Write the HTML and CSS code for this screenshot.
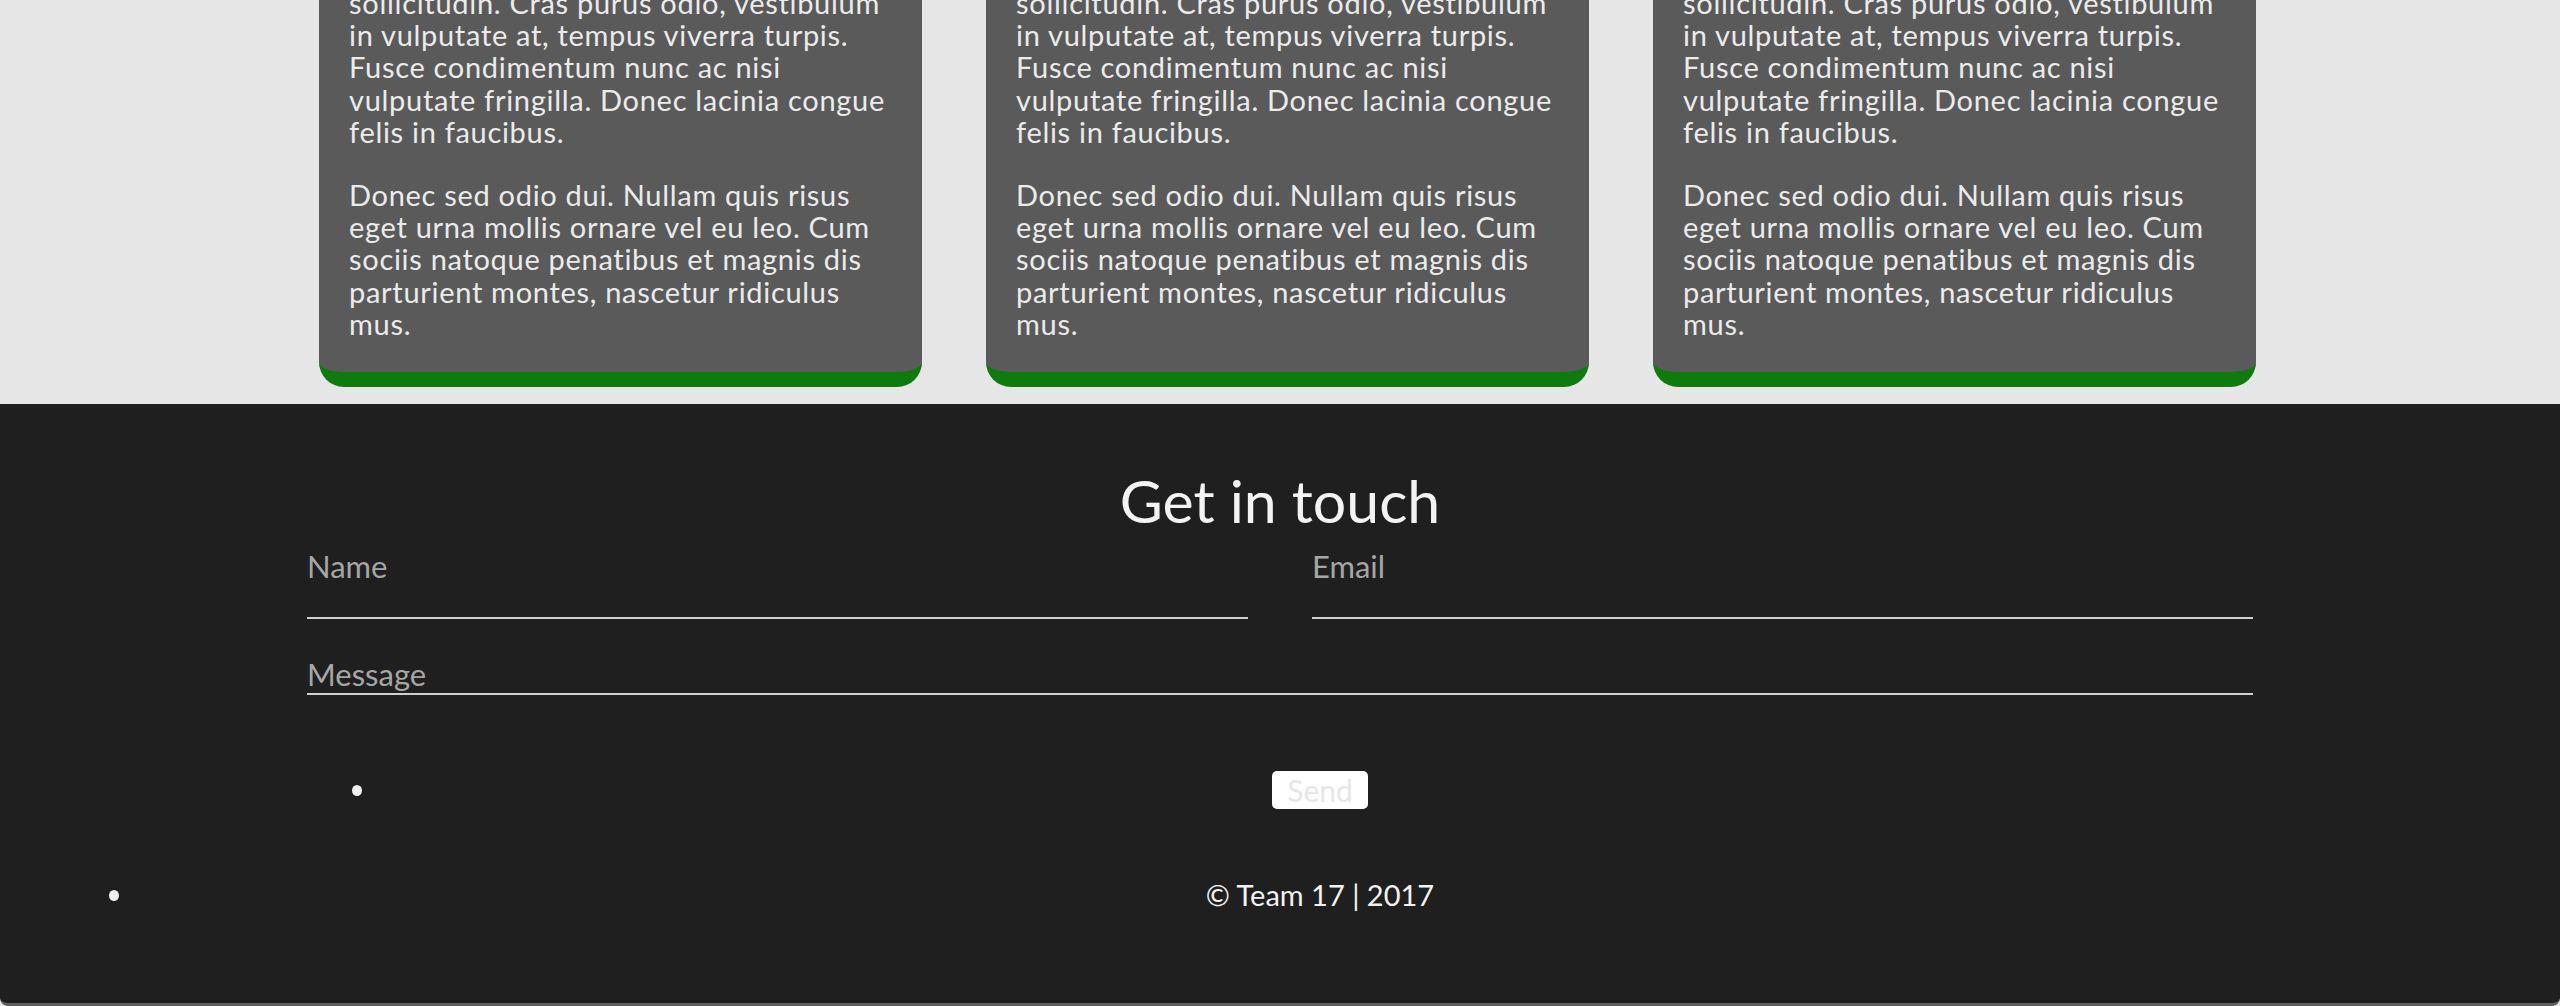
FILE: index.html
```html
<!DOCTYPE html>
<html lang="en">
<head>
<meta charset="utf-8">
<title>Team 17</title>
<link rel="stylesheet" href="styles.css">
</head>
<body>
<section class="features">
  <div class="cards">
    <article class="card">
      <p>sollicitudin. Cras purus odio, vestibulum<br>in vulputate at, tempus viverra turpis.<br>Fusce condimentum nunc ac nisi<br>vulputate fringilla. Donec lacinia congue<br>felis in faucibus.</p>
      <p>Donec sed odio dui. Nullam quis risus<br>eget urna mollis ornare vel eu leo. Cum<br>sociis natoque penatibus et magnis dis<br>parturient montes, nascetur ridiculus<br>mus.</p>
    </article>
    <article class="card">
      <p>sollicitudin. Cras purus odio, vestibulum<br>in vulputate at, tempus viverra turpis.<br>Fusce condimentum nunc ac nisi<br>vulputate fringilla. Donec lacinia congue<br>felis in faucibus.</p>
      <p>Donec sed odio dui. Nullam quis risus<br>eget urna mollis ornare vel eu leo. Cum<br>sociis natoque penatibus et magnis dis<br>parturient montes, nascetur ridiculus<br>mus.</p>
    </article>
    <article class="card">
      <p>sollicitudin. Cras purus odio, vestibulum<br>in vulputate at, tempus viverra turpis.<br>Fusce condimentum nunc ac nisi<br>vulputate fringilla. Donec lacinia congue<br>felis in faucibus.</p>
      <p>Donec sed odio dui. Nullam quis risus<br>eget urna mollis ornare vel eu leo. Cum<br>sociis natoque penatibus et magnis dis<br>parturient montes, nascetur ridiculus<br>mus.</p>
    </article>
  </div>
</section>
<footer class="footer">
  <h2 class="contact-title">Get in touch</h2>
  <form class="contact-form">
    <div class="field-row">
      <label class="field">
        <span class="field-label">Name</span>
        <span class="field-line"></span>
      </label>
      <label class="field">
        <span class="field-label">Email</span>
        <span class="field-line"></span>
      </label>
    </div>
    <label class="field field-message">
      <span class="field-label">Message</span>
      <span class="field-line thin"></span>
    </label>
    <div class="send-row">
      <span class="dot"></span>
      <div class="send-area"><button type="button" class="send-btn">Send</button></div>
    </div>
  </form>
  <div class="copyright-row">
    <span class="dot"></span>
    <p class="copyright">© Team 17 | 2017</p>
  </div>
</footer>
</body>
</html>
```
FILE: styles.css
```css
html, body {
  margin: 0;
  padding: 0;
}
body {
  background: #e6e6e6;
  font-family: Lato, "Liberation Sans", sans-serif;
  height: 1006px;
  overflow: hidden;
  display: flex;
  flex-direction: column;
}
.features {
  padding: 0 0 17px 319px;
  margin-top: -13px;
}
.cards {
  display: flex;
  gap: 64px;
}
.card {
  width: 603px;
  box-sizing: border-box;
  background: #5a5a5a;
  color: #ebebeb;
  padding: 0 10px 1px 30px;
  border-bottom: 15px solid #0f7b0f;
  border-radius: 0 0 25px 25px;
  font-size: 29px;
  letter-spacing: 0.7px;
  line-height: 32.2px;
}
.card p {
  margin: 0 0 31px;
  white-space: nowrap;
}
.footer {
  flex: 1;
  background: #1f1f1f;
  color: #f2f2f2;
  padding-top: 61px;
  border-bottom: 3px solid #5e5e5e;
  border-radius: 0 0 8px 8px;
}
.contact-title {
  margin: 0;
  text-align: center;
  font-weight: 400;
  font-size: 59px;
  line-height: 72px;
  color: #f3f3f3;
}
.contact-form {
  width: 1946px;
  margin: 11px auto 0;
}
.field-row {
  display: grid;
  grid-template-columns: 1fr 1fr;
  gap: 64px;
}
.field {
  display: flex;
  flex-direction: column;
}
.field-label {
  font-size: 31px;
  line-height: 36px;
  color: #a6a6a6;
}
.field-line {
  height: 33px;
  border-bottom: 2px solid #cfcfcf;
}
.field-message {
  margin-top: 37px;
}
.field-line.thin {
  height: 1px;
}
.send-row {
  display: flex;
  align-items: center;
  margin-top: 76px;
}
.dot {
  width: 10px;
  height: 11px;
  border-radius: 50%;
  background: #f0f0f0;
  flex: none;
}
.send-row .dot {
  margin-left: 45px;
  margin-right: 25px;
}
.send-area {
  flex: 1;
  display: flex;
  justify-content: center;
}
.send-btn {
  font-family: Lato, "Liberation Sans", sans-serif;
  font-size: 30px;
  width: 96px;
  height: 38px;
  line-height: 38px;
  padding: 0;
  border: none;
  border-radius: 5px;
  background: #ffffff;
  color: #e6e6e6;
}
.copyright-row {
  display: flex;
  align-items: center;
  margin-top: 70px;
  padding: 0 50px 0 109px;
}
.copyright-row .dot {
  margin-right: 11px;
}
.copyright {
  flex: 1;
  margin: 0;
  text-align: center;
  font-size: 29px;
  line-height: 32px;
  color: #f2f2f2;
}
```
